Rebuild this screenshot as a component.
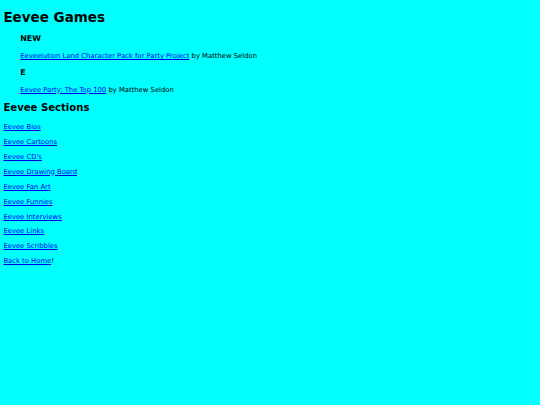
import React from "react";

const sections = [
  "Eevee Bios",
  "Eevee Cartoons",
  "Eevee CD's",
  "Eevee Drawing Board",
  "Eevee Fan Art",
  "Eevee Funnies",
  "Eevee Interviews",
  "Eevee Links",
  "Eevee Scribbles",
];

export default function App() {
  return (
    <div
      className="min-h-screen bg-[#00ffff] text-black px-[3.4px] py-[0.1px] text-[6.82px] leading-[8.2px]"
      style={{ fontFamily: '"DejaVu Sans", Verdana, sans-serif' }}
    >
      <h1 className="text-[13.5px] font-bold my-[9px] leading-[1.215]">Eevee Games</h1>
      <blockquote className="mx-[16.8px] my-[6.75px]">
        <h3 className="text-[7.9px] font-bold my-[7.9px] leading-[1.215]">NEW</h3>
        <p className="my-[6.75px]">
          <a href="#" className="text-[#0000ee] underline">
            Eeveelution Land Character Pack for Party Project
          </a>{" "}
          by Matthew Seldon
        </p>
        <h3 className="text-[7.9px] font-bold my-[7.9px] leading-[1.215]">E</h3>
        <p className="my-[6.75px]">
          <a href="#" className="text-[#0000ee] underline">
            Eevee Party: The Top 100
          </a>{" "}
          by Matthew Seldon
        </p>
      </blockquote>
      <h2 className="text-[10.1px] font-bold my-[8.4px] leading-[1.215]">Eevee Sections</h2>
      {sections.map((s) => (
        <p key={s} className="my-[6.75px]">
          <a href="#" className="text-[#0000ee] underline">
            {s}
          </a>
        </p>
      ))}
      <p className="my-[6.75px]">
        <a href="#" className="text-[#0000ee] underline">
          Back to Home
        </a>
        !
      </p>
    </div>
  );
}
